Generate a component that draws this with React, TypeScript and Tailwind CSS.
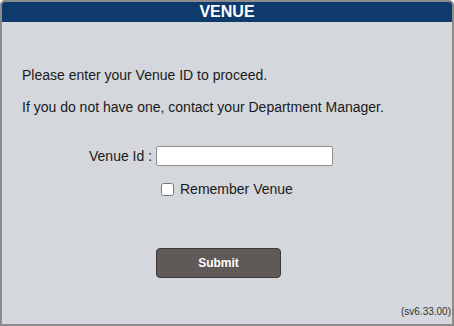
import { useState } from "react"

export default function App() {
  const [venueId, setVenueId] = useState("")
  const [remember, setRemember] = useState(false)

  return (
    <div className="w-[454px] h-[326px] bg-white" style={{ fontFamily: '"Liberation Sans", Arial, sans-serif' }}>
      <div className="flex h-full w-full flex-col overflow-hidden rounded-t-[5px] border-2 border-[#8c8c8c] bg-[#d4d7dc]">
        {/* Header */}
        <div className="flex h-[20px] shrink-0 items-center justify-center bg-[#0e3b6c] text-[16px] font-bold leading-none text-white">
          VENUE
        </div>

        {/* Body */}
        <div className="relative flex-1 text-[#1a1a1a]">
          <p className="ml-[20px] mt-[45px] text-[14px] leading-[16px]">Please enter your Venue ID to proceed.</p>
          <p className="ml-[20px] mt-[16px] text-[14px] leading-[16px]">
            If you do not have one, contact your Department Manager.
          </p>

          <div className="mt-[31px] flex items-center">
            <label className="ml-[87px] text-[14px] leading-[16px]">Venue Id :</label>
            <input
              value={venueId}
              onChange={(e) => setVenueId(e.target.value)}
              className="ml-[4px] h-[20px] w-[177px] rounded-[2px] border border-[#8f8f8f] bg-white px-1 text-[13px] outline-none"
            />
          </div>

          <label className="ml-[159px] mt-[15px] flex items-center text-[14px] leading-[16px]">
            <input
              type="checkbox"
              checked={remember}
              onChange={(e) => setRemember(e.target.checked)}
              className="m-0 h-[13px] w-[13px]"
            />
            <span className="ml-[6px]">Remember Venue</span>
          </label>

          <button className="ml-[154px] mt-[51px] flex h-[30px] w-[125px] items-center justify-center rounded-[4px] border border-[#3c3837] bg-[#5f5957] text-[12px] font-bold text-white">
            Submit
          </button>

          <span className="absolute bottom-[7px] right-[1px] text-[10px] leading-none text-[#333]">(sv6.33.00)</span>
        </div>
      </div>
    </div>
  )
}
